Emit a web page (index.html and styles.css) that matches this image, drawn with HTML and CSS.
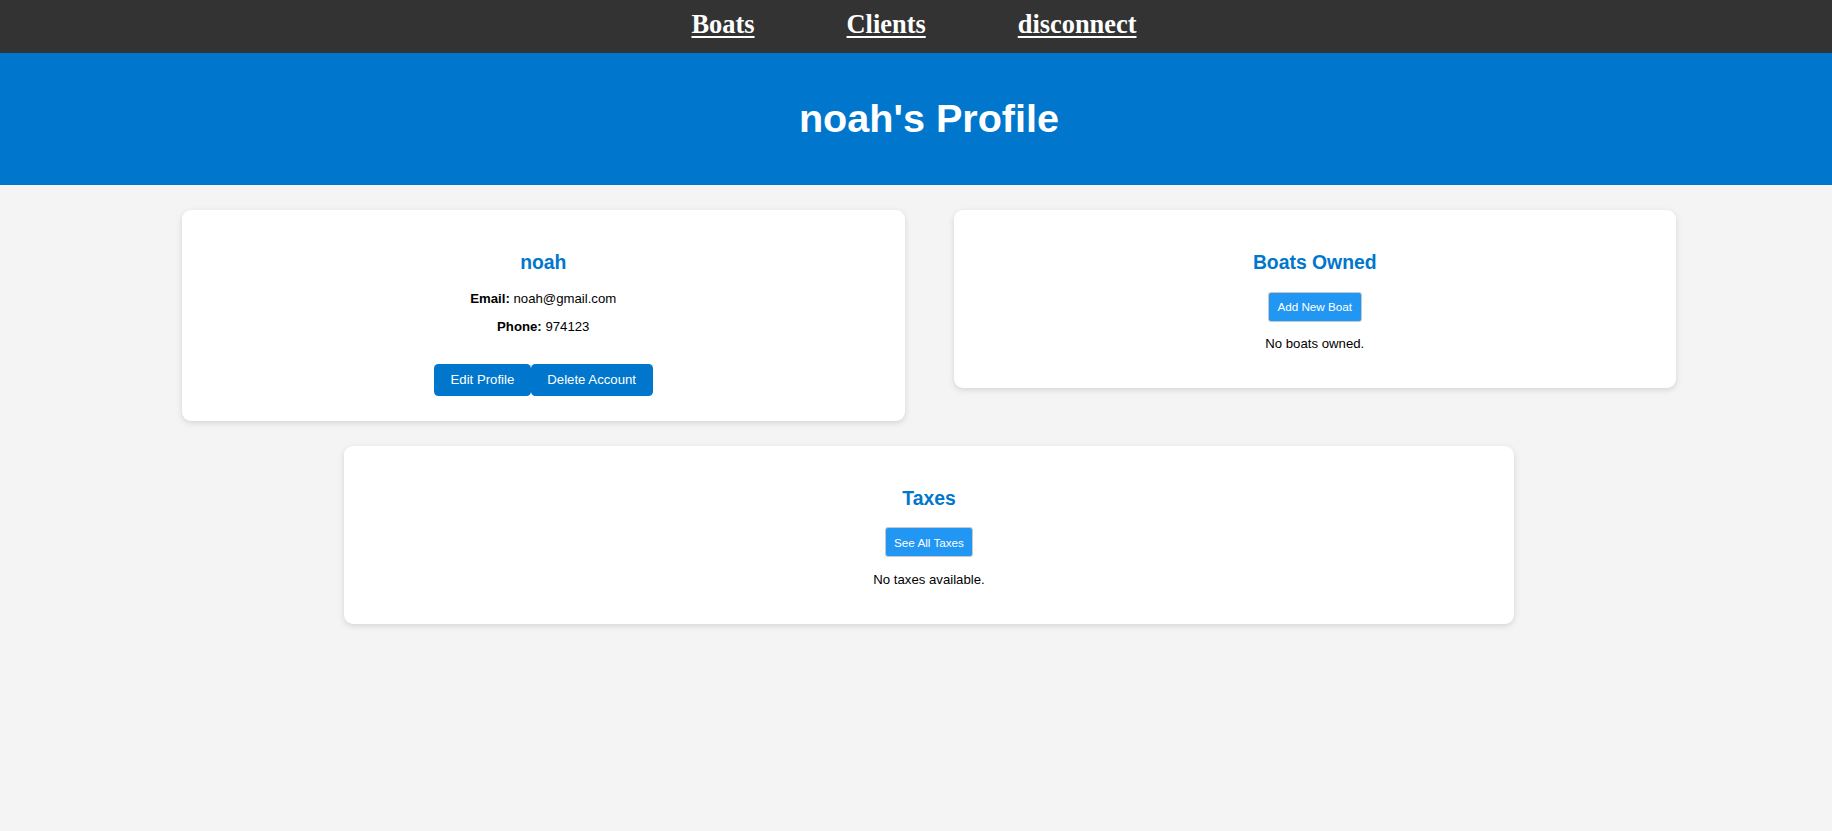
FILE: index.html
```html
<!DOCTYPE html>
<html lang="en">
<head>
<meta charset="utf-8">
<title>noah's Profile</title>
<link rel="stylesheet" href="styles.css">
</head>
<body>
<nav class="topnav">
  <a class="navlink" href="#">Boats</a>
  <a class="navlink" href="#">Clients</a>
  <a class="navlink" href="#">disconnect</a>
</nav>
<header class="hero">
  <h1 class="hero-title">noah's Profile</h1>
</header>
<main class="content">
  <div class="card-row">
    <section class="card card-user">
      <h2 class="card-title">noah</h2>
      <p class="info info-first"><strong>Email:</strong> noah@gmail.com</p>
      <p class="info"><strong>Phone:</strong> 974123</p>
      <div class="actions">
        <button class="btn-primary">Edit Profile</button><button class="btn-primary">Delete Account</button>
      </div>
    </section>
    <section class="card">
      <h2 class="card-title">Boats Owned</h2>
      <button class="btn-light">Add New Boat</button>
      <p class="empty">No boats owned.</p>
    </section>
  </div>
  <section class="card card-wide">
    <h2 class="card-title">Taxes</h2>
    <button class="btn-light">See All Taxes</button>
    <p class="empty">No taxes available.</p>
  </section>
</main>
</body>
</html>
```
FILE: styles.css
```css
* { box-sizing: border-box; }

html, body {
  margin: 0;
  padding: 0;
}

body {
  background: #f4f4f4;
  font-family: "Liberation Sans", Arial, sans-serif;
  color: #000;
  min-height: 831px;
}

.topnav {
  background: #333333;
  height: 53px;
  padding: 9px 4px 0 0;
  display: flex;
  justify-content: center;
  gap: 92px;
}

.navlink {
  display: block;
  font-family: "Liberation Serif", "Times New Roman", serif;
  font-weight: bold;
  font-size: 26.4px;
  line-height: 30px;
  color: #ffffff;
  text-decoration: underline;
  text-decoration-thickness: 2px;
  text-underline-offset: 3px;
}

.hero {
  background: #0077cc;
  height: 132px;
  padding: 42px 0 0 26px;
}

.hero-title {
  margin: 0;
  text-align: center;
  color: #ffffff;
  font-size: 39.6px;
  line-height: 46px;
  font-weight: bold;
}

.content {
  padding: 25px 0 0 26px;
  display: flex;
  flex-direction: column;
  align-items: center;
  gap: 25px;
}

.card-row {
  width: 1494px;
  display: flex;
  gap: 49px;
  align-items: flex-start;
}

.card-row .card {
  flex: 1 1 0;
}

.card {
  background: #ffffff;
  border-radius: 9px;
  box-shadow: 0 2px 6px rgba(0, 0, 0, 0.13);
  padding: 22px 22px 22px;
  text-align: center;
}

.card-wide {
  width: 1170px;
}

.card-title {
  margin: 19px 0 18.5px;
  font-size: 19.36px;
  line-height: 22px;
  font-weight: bold;
  color: #0077cc;
}

.info {
  margin: 12.5px 0 0;
  font-size: 13.2px;
  line-height: 15.2px;
}

.info-first {
  margin-top: 18px;
}

.card-user .card-title {
  margin-bottom: 0;
}

.actions {
  margin-top: 30px;
  margin-bottom: 3px;
  display: flex;
  justify-content: center;
}

.btn-primary {
  background: #0077cc;
  color: #ffffff;
  border: none;
  border-radius: 4.4px;
  font-family: "Liberation Sans", Arial, sans-serif;
  font-size: 13.2px;
  line-height: 15.2px;
  padding: 8.4px 16.5px;
  height: 32px;
  cursor: pointer;
}

.btn-light {
  display: block;
  margin: 0 auto;
  background: #2196f3;
  color: #ffffff;
  border: 1px solid #c6c9cc;
  border-radius: 3px;
  font-family: "Liberation Sans", Arial, sans-serif;
  font-size: 11.7px;
  line-height: 13.4px;
  height: 30px;
  padding: 7px 8.5px;
  cursor: pointer;
}

.empty {
  margin: 14.6px 0;
  font-size: 13.2px;
  line-height: 15.2px;
}
```
